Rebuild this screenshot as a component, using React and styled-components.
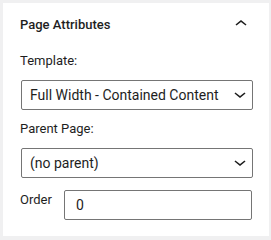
import React from 'react'
import styled, { createGlobalStyle } from 'styled-components'

const Global = createGlobalStyle`
  html, body { margin: 0; padding: 0; background: #f0f0f1; }
  body { font-family: Roboto, "Liberation Sans", sans-serif; color: #1e1e1e; }
`

const Page = styled.div`
  width: 271px;
  height: 240px;
  padding: 3px 2px 0 3px;
  box-sizing: border-box;
`

const Panel = styled.section`
  background: #fff;
  width: 266px;
  box-sizing: border-box;
`

const Header = styled.div`
  height: 44px;
  display: flex;
  align-items: center;
  justify-content: space-between;
  padding: 0 16px 0 17px;
`

const Title = styled.h2`
  margin: 0;
  font-size: 13px;
  line-height: 16px;
  font-weight: 500;
`

const Toggle = styled.span`
  display: flex;
  margin-top: -2px;
`

const Body = styled.div`
  padding: 6px 16px 16px 18px;
  display: flex;
  flex-direction: column;
`

const Label = styled.label`
  display: block;
  font-size: 13px;
  line-height: 16px;
  margin: ${p => p.$first ? '0' : '11px'} 0 11px -1px;
`

const SelectWrap = styled.div`
  position: relative;
  height: 30px;
`

const Select = styled.select`
  appearance: none;
  width: 100%;
  height: 30px;
  box-sizing: border-box;
  border: 1px solid #757575;
  border-radius: 2px;
  background: #fff;
  padding: 0 26px 0 8px;
  font-family: Roboto, "Liberation Sans", sans-serif;
  font-size: 14px;
  color: #1e1e1e;
  outline: none;
`

const Arrow = styled.span`
  position: absolute;
  right: 1px;
  top: 2px;
  display: flex;
  pointer-events: none;
`

const Row = styled.div`
  display: flex;
  align-items: flex-start;
  margin-top: 12px;
`

const RowLabel = styled.label`
  flex: 0 0 44px;
  font-size: 13px;
  line-height: 16px;
  margin: 2px 0 0 -1px;
`

const Input = styled.input`
  flex: 1;
  min-width: 0;
  height: 30px;
  box-sizing: border-box;
  border: 1px solid #757575;
  border-radius: 2px;
  padding: 0 11px;
  font-family: Roboto, "Liberation Sans", sans-serif;
  font-size: 14px;
  color: #1e1e1e;
  margin-right: 1px;
  outline: none;
`

const ChevronUp = () => (
  <svg width="24" height="24" viewBox="0 0 24 24" fill="#1e1e1e">
    <path d="M6.5 12.4L12 8l5.5 4.4-.9 1.2L12 10l-4.5 3.6-1-1.2z" />
  </svg>
)

const ChevronDown = () => (
  <svg width="24" height="24" viewBox="0 0 24 24" fill="#1e1e1e">
    <path d="M17.5 11.6L12 16l-5.5-4.4.9-1.2L12 14l4.5-3.6 1 1.2z" />
  </svg>
)

const Dropdown = ({ value }) => (
  <SelectWrap>
    <Select defaultValue={value}>
      <option>{value}</option>
    </Select>
    <Arrow><ChevronDown /></Arrow>
  </SelectWrap>
)

export default function App() {
  return (
    <Page>
      <Global />
      <Panel>
        <Header>
          <Title>Page Attributes</Title>
          <Toggle><ChevronUp /></Toggle>
        </Header>
        <Body>
          <Label $first>Template:</Label>
          <Dropdown value="Full Width - Contained Content" />
          <Label>Parent Page:</Label>
          <Dropdown value="(no parent)" />
          <Row>
            <RowLabel>Order</RowLabel>
            <Input defaultValue="0" />
          </Row>
        </Body>
      </Panel>
    </Page>
  )
}
